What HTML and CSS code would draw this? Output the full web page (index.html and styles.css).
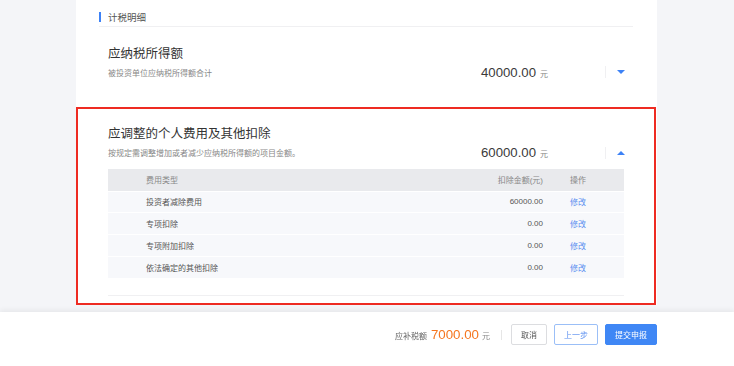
FILE: index.html
```html
<!DOCTYPE html>
<html lang="zh-CN">
<head>
<meta charset="utf-8">
<title>计税明细</title>
<link rel="stylesheet" href="styles.css">
</head>
<body>
<main class="panel">
  <div class="panel-head"><span class="head-bar"></span><span class="head-text">计税明细</span></div>

  <section class="item">
    <h2 class="item-title">应纳税所得额</h2>
    <div class="item-row">
      <p class="item-desc">被投资单位应纳税所得额合计</p>
      <div class="item-amount"><span class="num">40000.00</span><span class="unit">元</span></div>
      <div class="toggle"><span class="arrow down"></span></div>
    </div>
  </section>

  <section class="item item-open">
    <h2 class="item-title">应调整的个人费用及其他扣除</h2>
    <div class="item-row">
      <p class="item-desc">按规定需调整增加或者减少应纳税所得额的项目金额。</p>
      <div class="item-amount"><span class="num">60000.00</span><span class="unit">元</span></div>
      <div class="toggle"><span class="arrow up"></span></div>
    </div>
    <div class="table">
      <div class="tr th"><span class="c-type">费用类型</span><span class="c-amt">扣除金额(元)</span><span class="c-op">操作</span></div>
      <div class="tr"><span class="c-type">投资者减除费用</span><span class="c-amt">60000.00</span><a class="c-op link">修改</a></div>
      <div class="tr"><span class="c-type">专项扣除</span><span class="c-amt">0.00</span><a class="c-op link">修改</a></div>
      <div class="tr"><span class="c-type">专项附加扣除</span><span class="c-amt">0.00</span><a class="c-op link">修改</a></div>
      <div class="tr"><span class="c-type">依法确定的其他扣除</span><span class="c-amt">0.00</span><a class="c-op link">修改</a></div>
    </div>
  </section>
</main>

<footer class="footer">
  <div class="total"><span class="total-label">应补税额</span><span class="total-num">7000.00</span><span class="total-unit">元</span></div>
  <span class="sep"></span>
  <button class="btn btn-default">取消</button>
  <button class="btn btn-outline">上一步</button>
  <button class="btn btn-primary">提交申报</button>
</footer>
</body>
</html>
```
FILE: styles.css
```css
* { box-sizing: border-box; }
html, body { margin: 0; padding: 0; }
body {
  width: 734px;
  height: 366px;
  overflow: hidden;
  background: #f4f5f8;
  font-family: "Liberation Sans", "Noto Sans CJK SC", sans-serif;
  color: #333;
}

.panel {
  margin-left: 76px;
  width: 581px;
  height: 305px;
  background: #fff;
  padding: 0 24px 0 23px;
}

.panel-head {
  height: 27px;
  padding-top: 8px;
  display: flex;
  align-items: center;
  border-bottom: 1px solid #f0f0f2;
}
.head-bar {
  width: 2px;
  height: 10px;
  background: #3d82f6;
  margin-right: 7px;
}
.head-text {
  font-size: 9.5px;
  color: #555;
  line-height: 19px;
}

.item {
  padding: 19px 0 0 0;
  height: 80px;
}
.item-title {
  margin: 0 0 0 9px;
  font-size: 12.5px;
  font-weight: normal;
  line-height: 16px;
  color: #333;
}
.item-row {
  margin-top: 2px;
  height: 16px;
  display: flex;
  align-items: center;
  padding-left: 9px;
}
.item-desc {
  margin: 0;
  flex: 1;
  font-size: 8px;
  color: #888;
}
.item-amount {
  display: flex;
  align-items: baseline;
}
.num {
  font-size: 13.2px;
  color: #3a3a3a;
}
.unit {
  font-size: 8px;
  color: #888;
  margin-left: 4px;
}
.toggle {
  margin-left: 57px;
  width: 28px;
  height: 12px;
  border-left: 1px solid #f0f0f2;
  padding-left: 11px;
  display: flex;
  align-items: center;
}
.arrow {
  width: 0;
  height: 0;
  border-left: 4px solid transparent;
  border-right: 4px solid transparent;
}
.arrow.down { border-top: 4px solid #3d82f6; }
.arrow.up { border-bottom: 4px solid #3d82f6; }

.item-open {
  margin: 0 -23px 0 -23px;
  padding: 19px 23px 0 23px;
  height: 198px;
  box-shadow: inset 0 0 0 2px #ee2b22;
}
.item-open .item-row { margin-top: 2.5px; }

.table {
  margin: 8px 9px 0 9px;
  padding-bottom: 17px;
  border-bottom: 1px solid #f0f0f2;
}
.tr {
  display: grid;
  grid-template-columns: 1fr 100px 54px;
  align-items: center;
  height: 21.75px;
  background: #f7f8fb;
  border-top: 1px solid #fff;
  font-size: 8px;
  color: #555;
}
.tr.th {
  height: 22px;
  background: #e9eaed;
  border-top: none;
  color: #888;
}
.c-type { padding-left: 38px; }
.c-amt { text-align: right; padding-right: 27px; }
.c-op { text-align: left; }
.link { color: #5a8ff0; cursor: pointer; }

.footer {
  position: fixed;
  left: 0;
  right: 0;
  bottom: 0;
  height: 54px;
  background: #fff;
  box-shadow: 0 -2px 5px rgba(0, 0, 0, 0.06);
  display: flex;
  justify-content: flex-end;
  align-items: flex-start;
  padding: 12px 77px 0 0;
}
.total {
  display: flex;
  align-items: baseline;
  height: 21px;
  padding-top: 3px;
}
.total-label { font-size: 8px; color: #666; margin-right: 4px; }
.total-num { font-size: 13.3px; color: #f5761f; }
.total-unit { font-size: 8px; color: #888; margin-left: 3px; }
.sep {
  width: 1px;
  height: 10px;
  background: #e6e6e6;
  margin: 6px 9px 0 11px;
}
.btn {
  height: 21px;
  padding: 0;
  font-family: inherit;
  font-size: 8px;
  border-radius: 2px;
  background: #fff;
  cursor: pointer;
}
.btn-default {
  width: 36px;
  border: 1px solid #dcdde0;
  color: #555;
}
.btn-outline {
  width: 44px;
  margin-left: 7px;
  border: 1px solid #9bbff7;
  color: #5a8ff0;
}
.btn-primary {
  width: 52px;
  margin-left: 7px;
  border: 1px solid #3f87f5;
  background: #3f87f5;
  color: #fff;
}
```
